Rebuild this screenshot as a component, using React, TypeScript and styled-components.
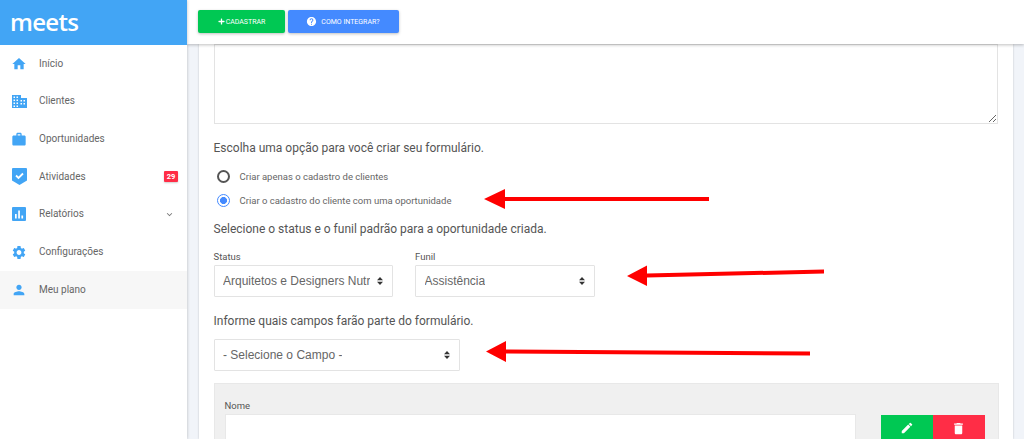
import React from 'react'
import styled, { createGlobalStyle } from 'styled-components'
import { MdHome, MdWork, MdSettings, MdPerson, MdHelp, MdEdit, MdDelete, MdExpandMore } from 'react-icons/md'
import { FaPlus } from 'react-icons/fa'

const GlobalStyle = createGlobalStyle`
  html, body {
    margin: 0;
    padding: 0;
    height: 439px;
    overflow: hidden;
    background: #f1f4f9;
    font-family: Roboto, "Liberation Sans", sans-serif;
    color: #555;
  }
  * { box-sizing: border-box; }
`

const BLUE = '#42a5f5'

const BuildingIcon = () => (
  <svg width="15" height="13" viewBox="0 0 15 13" fill={BLUE}>
    <path
      d="M0 0h9v3h6v10H0zM1.500 1.500v1.500h1.500V1.500zm3 0v1.500h1.500V1.500zM1.500 4.500v1.500h1.500V4.500zm3 0v1.500h1.500V4.500zM1.500 7.500v1.500h1.500V7.500zm3 0v1.500h1.500V7.500zM1.500 10.500v1.500h1.500v-1.500zm3 0v1.500h1.500v-1.500zM8.500 5v1.500H10V5zm3 0v1.500H13V5zM8.500 8v1.500H10V8zm3 0v1.500H13V8z"
      fillRule="evenodd"
    />
  </svg>
)

const ShieldIcon = () => (
  <svg width="15" height="17" viewBox="0 0 15 17">
    <path d="M1 0h13a1 1 0 0 1 1 1v11.500L7.500 17 0 12.500V1a1 1 0 0 1 1-1z" fill={BLUE} />
    <path d="M4 7.500L6.500 10 11 5.500" fill="none" stroke="#fff" strokeWidth="1.800" />
  </svg>
)

const ChartIcon = () => (
  <svg width="14" height="14" viewBox="0 0 14 14">
    <rect width="14" height="14" rx="1" fill={BLUE} />
    <path d="M3 7h1.700v4.500H3zM6.200 3.500h1.700v8H6.200zM9.400 8.500h1.700v3H9.400z" fill="#fff" />
  </svg>
)

const menu = [
  { label: 'Início', icon: <MdHome size={20} color={BLUE} /> },
  { label: 'Clientes', icon: <BuildingIcon /> },
  { label: 'Oportunidades', icon: <MdWork size={19} color={BLUE} /> },
  { label: 'Atividades', icon: <ShieldIcon />, badge: '29' },
  { label: 'Relatórios', icon: <ChartIcon />, caret: true },
  { label: 'Configurações', icon: <MdSettings size={21} color={BLUE} /> },
  { label: 'Meu plano', icon: <MdPerson size={20} color={BLUE} />, active: true },
]

const App = () => (
  <Page>
    <GlobalStyle />
    <Sidebar>
      <Brand>
        <Logo>meets</Logo>
      </Brand>
      <Menu>
        {menu.map(item => (
          <MenuItem key={item.label} $active={item.active}>
            <MenuIcon>{item.icon}</MenuIcon>
            <MenuLabel>{item.label}</MenuLabel>
            {item.badge ? <Badge>{item.badge}</Badge> : null}
            {item.caret ? <Caret><MdExpandMore size={11} /></Caret> : null}
          </MenuItem>
        ))}
      </Menu>
    </Sidebar>
    <Main>
      <Topbar>
        <GreenButton><FaPlus size={7} />CADASTRAR</GreenButton>
        <BlueButton><MdHelp size={11} />COMO INTEGRAR?</BlueButton>
      </Topbar>
      <Card>
        <TextArea />
        <Question>Escolha uma opção para você criar seu formulário.</Question>
        <RadioList>
          <RadioRow>
            <RadioOff />
            Criar apenas o cadastro de clientes
          </RadioRow>
          <RadioRow>
            <RadioOn />
            Criar o cadastro do cliente com uma oportunidade
            <Arrow width={225} height={24} style={{ left: 267, top: -4 }}>
              <path d="M0 10L21 0V8H225V12H21V20z" fill="#f00" />
            </Arrow>
          </RadioRow>
        </RadioList>
        <Question>Selecione o status e o funil padrão para a oportunidade criada.</Question>
        <Fields>
          <Field>
            <FieldLabel>Status</FieldLabel>
            <SelectBox $width={179.5}>
              <SelectText>Arquitetos e Designers Nutr</SelectText>
              <Updown />
            </SelectBox>
          </Field>
          <Field>
            <FieldLabel>Funil</FieldLabel>
            <SelectBox $width={179.5}>
              <SelectText>Assistência</SelectText>
              <Updown />
            </SelectBox>
            <Arrow width={200} height={24} style={{ left: 212, top: 13 }}>
              <path d="M0 12L20 1.500V9.500L197 5.500V9.500L20 13.500V22z" fill="#f00" />
            </Arrow>
          </Field>
        </Fields>
        <Question>Informe quais campos farão parte do formulário.</Question>
        <CampoRow>
          <SelectBox $width={246}>
            <SelectText>- Selecione o Campo -</SelectText>
            <Updown />
          </SelectBox>
          <Arrow width={326} height={24} style={{ left: 272.500, top: 2 }}>
            <path d="M0 10.500L20 0V8.500L324 10.500V14.500L20 12.500V21z" fill="#f00" />
          </Arrow>
        </CampoRow>
        <FieldPanel>
          <PanelField>
            <FieldLabel>Nome</FieldLabel>
            <PanelInput />
          </PanelField>
          <PanelActions>
            <EditAction><MdEdit size={14} /></EditAction>
            <DeleteAction><MdDelete size={15} /></DeleteAction>
          </PanelActions>
        </FieldPanel>
      </Card>
    </Main>
  </Page>
)

const Updown = () => (
  <UpdownIcon width="6" height="8" viewBox="0 0 6 8">
    <path d="M3 0L6 3.200H0zM3 8L0 4.800H6z" fill="#333" />
  </UpdownIcon>
)

const Page = styled.div`
  display: flex;
  width: 1024px;
  height: 439px;
  overflow: hidden;
`

const Sidebar = styled.aside`
  flex: 0 0 187px;
  height: 439px;
  background: #fff;
  box-shadow: 0 0 3px rgba(0, 0, 0, 0.25);
  position: relative;
  z-index: 2;
`

const Brand = styled.div`
  height: 45px;
  background: ${BLUE};
  padding-left: 10px;
  display: flex;
  align-items: center;
`

const Logo = styled.span`
  font-family: "Open Sans", sans-serif;
  font-size: 24px;
  font-weight: 600;
  letter-spacing: -0.7px;
  color: #fff;
  line-height: 1;
  position: relative;
  top: -1px;
`

const Menu = styled.nav`
  padding-top: 0;
`

const MenuItem = styled.div<{ $active?: boolean }>`
  display: flex;
  align-items: center;
  height: 37.67px;
  padding-left: 11px;
  background: ${props => (props.$active ? '#f7f7f7' : 'transparent')};
`

const MenuIcon = styled.span`
  display: flex;
  width: 16px;
  justify-content: center;
  margin-right: 12px;
`

const MenuLabel = styled.span`
  flex: 1;
  font-size: 10px;
  color: #666;
  position: relative;
  top: -0.5px;
`

const Badge = styled.span`
  width: 14px;
  height: 11px;
  margin-right: 9px;
  background: #ff2d46;
  color: #fff;
  font-size: 7.500px;
  font-weight: 700;
  line-height: 11px;
  text-align: center;
  border-radius: 1px;
  box-shadow: 0 1px 2px rgba(0, 0, 0, 0.2);
`

const Caret = styled.span`
  display: flex;
  color: #777;
  margin-right: 12px;
`

const Main = styled.main`
  flex: 1;
  min-width: 0;
  display: flex;
  flex-direction: column;
`

const Topbar = styled.header`
  height: 44px;
  flex: none;
  background: #fff;
  display: flex;
  align-items: flex-start;
  gap: 2.500px;
  padding: 10px 0 0 11px;
  box-shadow: 0 1px 3px rgba(0, 0, 0, 0.25);
  position: relative;
  z-index: 1;
`

const ActionButton = styled.button`
  height: 23px;
  border: 0;
  border-radius: 2px;
  display: flex;
  align-items: center;
  justify-content: center;
  color: #fff;
  font-family: Roboto, sans-serif;
  font-size: 7px;
  box-shadow: 0 1px 3px rgba(0, 0, 0, 0.25);
  padding: 0;
`

const GreenButton = styled(ActionButton)`
  width: 87px;
  background: #00c853;
  gap: 1px;
`

const BlueButton = styled(ActionButton)`
  width: 111px;
  background: #448aff;
  gap: 4px;
`

const Card = styled.section`
  flex: 1;
  margin: 0 11px 0 12px;
  padding: 0 15px 0 14.5px;
  background: #fff;
  box-shadow: 0 0 2px rgba(0, 0, 0, 0.2);
  min-height: 0;
  overflow: hidden;
`

const TextArea = styled.textarea`
  display: block;
  height: 80px;
  width: 100%;
  margin: 0 0 17px;
  padding: 0;
  background: #fff;
  border: 1px solid #e3e3e3;
  outline: none;
  resize: vertical;
`

const Question = styled.p`
  margin: 0;
  font-size: 12px;
  line-height: 15px;
  color: #555;
`

const RadioList = styled.div`
  display: flex;
  flex-direction: column;
  gap: 10px;
  padding: 13px 0 14.500px 3px;
`

const RadioRow = styled.label`
  position: relative;
  display: flex;
  align-items: center;
  gap: 10px;
  height: 14px;
  font-size: 9.500px;
  color: #666;
`

const RadioOff = styled.span`
  width: 13px;
  height: 13px;
  border-radius: 50%;
  border: 2px solid #555;
`

const RadioOn = styled.span`
  width: 13px;
  height: 13px;
  border-radius: 50%;
  border: 1.500px solid #448aff;
  background: radial-gradient(circle, #448aff 0 3.200px, #fff 3.800px);
`

const Arrow = styled.svg`
  position: absolute;
  overflow: visible;
`

const Fields = styled.div`
  display: flex;
  gap: 22px;
  padding: 14.500px 0 17px;
`

const Field = styled.div`
  position: relative;
`

const FieldLabel = styled.div`
  font-size: 9.500px;
  line-height: 11px;
  color: #555;
  margin-bottom: 3px;
`

const SelectBox = styled.div<{ $width: number }>`
  width: ${props => props.$width}px;
  height: 32px;
  background: #fff;
  border: 1px solid #e3e3e3;
  border-radius: 1px;
  display: flex;
  align-items: center;
  justify-content: space-between;
  padding: 0 9px 0 8.500px;
  font-family: "Liberation Sans", sans-serif;
  font-size: 12px;
  color: #666;
  white-space: nowrap;
`

const SelectText = styled.span`
  overflow: hidden;
`

const UpdownIcon = styled.svg`
  flex: none;
`

const CampoRow = styled.div`
  position: relative;
  margin: 10px 0 0;
`

const FieldPanel = styled.div`
  width: 785px;
  height: 100px;
  margin-top: 12px;
  background: #f0f0f0;
  border: 1px solid #e8e8e8;
  padding: 15.500px 13px 0 10px;
  display: flex;
  align-items: flex-start;
  justify-content: space-between;
`

const PanelField = styled.div`
  width: 631px;
`

const PanelInput = styled.div`
  height: 40px;
  background: #fff;
  border: 1px solid #e8e8e8;
`

const PanelActions = styled.div`
  display: flex;
  margin-top: 15.500px;
`

const ActionCell = styled.div`
  width: 52px;
  height: 26px;
  display: flex;
  align-items: center;
  justify-content: center;
  color: #fff;
`

const EditAction = styled(ActionCell)`
  background: #00c853;
`

const DeleteAction = styled(ActionCell)`
  background: #ff2d46;
`

export default App
